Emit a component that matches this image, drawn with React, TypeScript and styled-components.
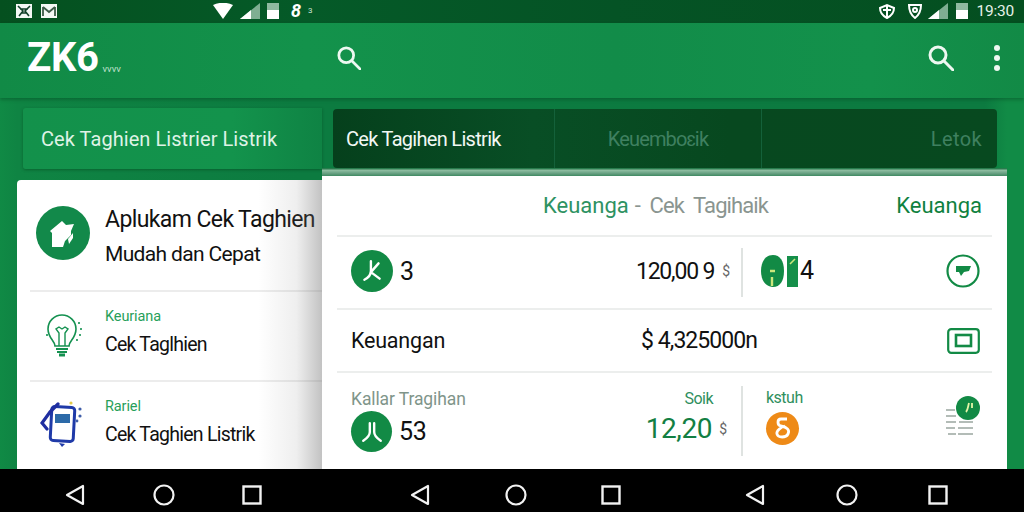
import React from "react";
import styled, { createGlobalStyle } from "styled-components";

const Global = createGlobalStyle`
  html, body { margin: 0; padding: 0; background: #0f8443; }
  #root { width: 1024px; height: 512px; overflow: hidden; }
  * { box-sizing: border-box; }
`;

const Page = styled.div`
  width: 1024px; height: 512px; display: flex; flex-direction: column;
  font-family: Roboto, "Liberation Sans", sans-serif; color: #111; overflow: hidden;
`;

const StatusBar = styled.div`
  height: 23px; flex: none; display: flex; align-items: center; color: #fff;
  padding: 0 10px 2px 16px;
  background: linear-gradient(90deg, #05501f 0%, #055a28 30%, #055325 60%, #044f20 100%);
`;
const StatusGroup = styled.div<{ $gap?: number; $ml?: number; $mr?: number }>`
  display: flex; align-items: center; gap: ${p => p.$gap ?? 7}px;
  margin-left: ${p => p.$ml ?? 0}px; margin-right: ${p => p.$mr ?? 0}px;
`;
const StatusTime = styled.span`font-size: 15.5px; color: #e6f2ea; letter-spacing: -.2px; margin-left: 0;`;
const StatusTiny = styled.span`font-size: 8px; color: #cfe5d6;`;
const StatusGlyph = styled.span`font-size: 18px; font-weight: 700; font-style: italic; color: #fff;`;

const AppBar = styled.header`
  height: 75px; flex: none; display: flex; align-items: center; color: #fff; position: relative;
  padding: 0 24px 6px 27px;
  background: linear-gradient(90deg, #118a46 0%, #13924b 30%, #128c49 60%, #13914b 85%, #128a46 100%);
  box-shadow: 0 2px 3px rgba(0,60,30,.35);
  z-index: 2;
`;
const Logo = styled.div`font-size: 40px; font-weight: 700; line-height: 1; letter-spacing: -.4px;`;
const LogoSub = styled.span`font-size: 9.5px; color: #bfe0cb; margin: 22px 0 0 4px;`;
const SearchA = styled.div`margin-left: 216px; display: flex;`;
const AppBarEnd = styled.div`margin-left: auto; display: flex; align-items: center; gap: 40px;`;
const Dots = styled.div`display: flex; flex-direction: column; gap: 4px;
  i { width: 6px; height: 6px; border-radius: 50%; background: #eef8f1; display: block; }
`;

const Body = styled.main`
  flex: 1; min-height: 0; display: flex; padding-left: 17px;
  background: linear-gradient(90deg, #108a45 0, #0f8443 17px, #0c7b40 300px, #0c7a40 985px, #118b46 1007px);
`;
const LeftCol = styled.section`width: 305px; flex: none; display: flex; flex-direction: column; padding-top: 10px;`;
const LeftTab = styled.div`
  height: 61px; margin-left: 6px; flex: none; border-radius: 3px 0 0 3px;
  display: flex; align-items: center; padding-left: 18px; font-size: 20px; letter-spacing: .06px; color: #dff3e6;
  background: linear-gradient(90deg, #13914b, #13934c 70%, #0f8344);
  box-shadow: 0 1px 3px rgba(0,50,20,.4);
  white-space: nowrap;
`;
const LeftCard = styled.div`
  flex: 1; margin-top: 11px; background: #fff; border-radius: 4px 0 0 0; position: relative; overflow: hidden;
  &::after { content: ""; position: absolute; top: 0; right: 0; bottom: 0; width: 64px;
    background: linear-gradient(90deg, rgba(120,120,120,0), rgba(120,120,120,.12) 60%, rgba(110,110,110,.42)); }
`;
const Hero = styled.div`height: 110px; display: flex; align-items: center; padding: 0 0 5px 19px; gap: 15px; white-space: nowrap;`;
const HeroIcon = styled.div`
  width: 54px; height: 54px; border-radius: 50%; background: #12894a; flex: none;
  display: flex; align-items: center; justify-content: center;
`;
const HeroCopy = styled.div`padding-top: 9px;`;
const HeroText = styled.div`font-size: 23px; line-height: 34px; letter-spacing: -.6px;`;
const HeroSub = styled.div`font-size: 21px; line-height: 34px; letter-spacing: -.65px;`;
const Item = styled.div`
  margin-left: 13px; border-top: 2px solid #ececec; height: 90px; display: flex; align-items: center;
  white-space: nowrap; padding-bottom: 6px;
`;
const ItemIcon = styled.div<{ $dy: number; $pr: number }>`
  width: 75px; flex: none; display: flex; justify-content: center; padding-right: ${p => p.$pr}px; padding-top: ${p => p.$dy}px;
`;
const ItemKicker = styled.div`font-size: 14.5px; color: #27a05a; line-height: 20px; letter-spacing: -.1px;`;
const ItemTitle = styled.div`font-size: 19.5px; line-height: 30px; letter-spacing: -.75px; margin-top: 3px;`;

const RightCol = styled.section`width: 685px; flex: none; display: flex; flex-direction: column; padding-top: 11px;`;
const Tabs = styled.div`
  height: 59px; flex: none; margin: 0 10px 0 11px; border-radius: 4px; display: flex; background: #07491f;
  background: linear-gradient(90deg, #05401c, #084e25 30%, #07481f 60%, #07491f);
`;
const Tab = styled.div<{ $w: number; $active?: boolean; $align?: string; $ls: number }>`
  width: ${p => p.$w}px; display: flex; align-items: center; white-space: nowrap;
  justify-content: ${p => p.$align ?? "center"};
  font-size: 20px;
  letter-spacing: ${p => p.$ls}px;
  color: ${p => (p.$active ? "#f2f8f4" : "#3f8060")};
  border-right: 1px solid #14613a;
  &:last-child { border-right: 0; flex: 1; padding-right: 15px; }
  ${p => (p.$active ? "padding-left: 13px;" : "")}
`;
const Glow = styled.div`
  height: 8px; flex: none; background: linear-gradient(180deg, #0d6a36 0, #8dbca0 30%, #5f9a7b 75%, #3f8a62 100%);
`;
const Panel = styled.div`flex: 1; min-height: 0; background: #fff; padding: 0 15px; display: flex; flex-direction: column; position: relative;`;
const PanelHead = styled.div`height: 59px; flex: none; display: flex; align-items: center; padding: 0 10px 0 206px; font-size: 22px; white-space: nowrap;`;
const HeadGreen = styled.span`color: #2e9262; margin-right: 6px;`;
const HeadGrey = styled.span`color: #8a9590; letter-spacing: -.9px; word-spacing: 5px;`;
const HeadEnd = styled.span`margin-left: auto; color: #0f8140;`;

const Row = styled.div<{ $h: number }>`
  height: ${p => p.$h}px; flex: none; border-top: 2px solid #eceeed; display: flex; align-items: center;
  padding-left: 14px; padding-right: 12px; white-space: nowrap;
`;
const Circle = styled.div<{ $s: number; $bg?: string }>`
  width: ${p => p.$s}px; height: ${p => p.$s}px; border-radius: 50%; background: ${p => p.$bg ?? "#128a45"}; flex: none;
  display: flex; align-items: center; justify-content: center;
`;
const Num = styled.span`font-size: 25px; margin-left: 7px; letter-spacing: -.3px;`;
const NumTight = styled(Num)`margin-left: 2px;`;
const Amount = styled.span`font-size: 23px; letter-spacing: -1.2px;`;
const Small = styled.span<{ $ml: number }>`font-size: 14px; margin-left: ${p => p.$ml}px; color: #666;`;
const VLine = styled.div<{ $h: number }>`width: 2px; height: ${p => p.$h}px; background: #dfe3e1; flex: none;`;
const Push = styled.div`flex: 1;`;
const LeftSide = styled.div`width: 390px; flex: none; display: flex; align-items: center; padding: 0 11px 3px 0;`;
const RightSide = styled.div<{ $pl?: number; $pb?: number }>`
  flex: 1; display: flex; align-items: center; padding-left: ${p => p.$pl ?? 18}px; padding-bottom: ${p => p.$pb ?? 4}px;
`;
const Label = styled.span`font-size: 21.5px; letter-spacing: -.2px;`;
const Money = styled.span`font-size: 23px; letter-spacing: -.95px; margin-right: 190px; margin-left: auto;`;
const Stack = styled.div`display: flex; flex-direction: column;`;
const StackEnd = styled(Stack)`align-items: flex-end; margin-right: 14px; margin-top: -4px;`;
const Caption = styled.span`font-size: 16px; color: #2f8f5d; line-height: 22px; letter-spacing: -.5px;`;
const SoikCaption = styled(Caption)`margin-right: 14px;`;
const CaptionGrey = styled.span`font-size: 17.5px; line-height: 22px; letter-spacing: -.1px; color: #7f958a; margin-bottom: 1px;`;
const GreenAmount = styled.span`font-size: 28px; color: #137f43; letter-spacing: -.4px; line-height: 38px;`;
const Row3Left = styled.div`width: 390px; flex: none; display: flex; align-items: center; padding-bottom: 1px;`;
const Inline = styled.div`display: flex; align-items: center;`;
const RightStack = styled(Stack)`gap: 3px; margin-top: -2px;`;
const Illus = styled.div`margin-left: auto; margin-top: 4px; margin-right: -1px; display: flex;`;

const NavBar = styled.nav`height: 43px; flex: none; background: #000; display: flex; align-items: center; padding-top: 10px; padding-bottom: 2px;`;
const NavGroup = styled.div<{ $w: number; $ml: number }>`
  width: ${p => p.$w}px; margin-left: ${p => p.$ml}px; display: flex; justify-content: space-between; align-items: center;
`;

const Mail = ({ k }: { k?: boolean }) => (
  <svg width="16" height="16" viewBox="0 0 16 16">
    <rect x="0" y="1" width="16" height="14" fill="#f4f8f5" />
    {k
      ? <path d="M2 3l5 5-4 5M14 3L9 8l4 5M4 6h8M5 10h6" stroke="#12402a" strokeWidth="1.6" fill="none" />
      : <path d="M2 4l6 5 6-5M2 4v9M14 4v9" stroke="#3d5a48" strokeWidth="1.8" fill="none" />}
  </svg>
);
const Wifi = () => <svg width="20" height="16" viewBox="0 0 20 16"><path d="M0 2C6-1 14-1 20 2L10 16z" fill="#fff" /></svg>;
const Signal = () => (
  <svg width="20" height="16" viewBox="0 0 20 16">
    <path d="M0 16L20 0v16z" fill="#7fae92" /><path d="M0 16L11 7v9z" fill="#fff" />
  </svg>
);
const Battery = () => (
  <svg width="12" height="17" viewBox="0 0 12 17">
    <rect x="0" y="1" width="12" height="16" fill="#8fb9a0" /><rect x="0" y="8" width="12" height="9" fill="#fff" />
  </svg>
);
const Shield = ({ t }: { t?: boolean }) => (
  <svg width="16" height="16" viewBox="0 0 16 16" fill="none" stroke="#fff" strokeWidth="2">
    {t
      ? <><path d="M1 5l7-3 7 3c0 5-3 8-7 10C4 13 1 10 1 5z" /><path d="M8 3v11M4 7h8" /></>
      : <><path d="M2 2h12c0 6-2 10-6 13C4 12 2 8 2 2z" /><circle cx="8" cy="7" r="2" /></>}
  </svg>
);
const Search = ({ size }: { size: number }) => (
  <svg width={size} height={size} viewBox="0 0 26 26" fill="none" stroke="#eef8f1" strokeWidth="3" strokeLinecap="round">
    <circle cx="10" cy="10" r="8" /><path d="M16 16l9 9" />
  </svg>
);
const Home = () => (
  <svg width="30" height="30" viewBox="0 0 30 30">
    <path d="M2 13L14 3l4 4 8-1-3 7v4l-6 6-2 6H4V15z" fill="#fff" />
    <path d="M20 21l5-6v5l-4 6z" fill="#fff" />
  </svg>
);
const Bulb = () => (
  <svg width="38" height="50" viewBox="0 0 38 50" fill="none" stroke="#149150" strokeWidth="1.6">
    <path d="M11 34c0-5-7-8-7-17A14 14 0 0 1 32 17c0 9-7 12-7 17z" />
    <path d="M15 34V21l-3-4 3-2 3 2 3-2 3 2-3 4v13" strokeWidth="1.4" />
    <path d="M12 37h12M13 40h10" strokeWidth="2.2" /><path d="M15 43h6" strokeWidth="3" />
    <path d="M35 10v2M37 16v2M36 22v2M33 27v2" strokeWidth="1.6" />
    <path d="M3 22v2" strokeWidth="1.6" />
  </svg>
);
const Phone = () => (
  <svg width="44" height="48" viewBox="0 0 44 48" fill="none">
    <rect x="11" y="7" width="23" height="34" rx="3" stroke="#1f3aa8" strokeWidth="3" transform="rotate(3 22 24)" />
    <rect x="15" y="14" width="15" height="9" fill="#2c6aa8" />
    <path d="M10 12L2 23l5 6M10 12l8-8" stroke="#1f2ea0" strokeWidth="3.2" strokeLinecap="round" />
    <path d="M19 43l3 4 3-3z" fill="#1f3aa8" />
    <circle cx="31" cy="3" r="1.6" fill="#e3cb4a" /><circle cx="40" cy="9" r="1.6" fill="#3f5da8" />
    <circle cx="40" cy="16" r="1.6" fill="#3f5da8" /><circle cx="37" cy="21" r="1.4" fill="#3f5da8" />
  </svg>
);
const KMark = ({ s, split }: { s: number; split?: boolean }) => (
  <svg width={s} height={s} viewBox="0 0 22 22" fill="none" stroke="#fff" strokeWidth="2.2" strokeLinecap="round">
    {split
      ? <path d="M9 3v8c0 3-3 6-6 8M13 3v8c0 3 3 6 6 8" />
      : <path d="M10 2v9c0 3-2 6-6 8M17 4l-7 8 8 6" />}
  </svg>
);
const Leaf = () => (
  <svg width="37" height="32" viewBox="0 0 37 32">
    <path d="M12 0c7 0 11 6 11 16s-4 16-11 16S0 26 0 16 5 0 12 0z" fill="#128a45" />
    <rect x="26" y="1" width="11" height="31" fill="#158f4a" />
    <path d="M9 16h5M11 22v9" stroke="#cbe77c" strokeWidth="2.4" />
    <path d="M29 9l5-5" stroke="#cbe77c" strokeWidth="1.6" />
  </svg>
);
const FlagCircle = () => (
  <svg width="34" height="34" viewBox="0 0 34 34" fill="none">
    <circle cx="17" cy="17" r="15.5" stroke="#128a45" strokeWidth="2.2" />
    <path d="M10 12h15l-2 5-5 1-3 4-2-4h-3z" fill="#128a45" />
  </svg>
);
const CardIcon = () => (
  <svg width="33" height="26" viewBox="0 0 33 26" fill="none">
    <rect x="1.2" y="1.2" width="30.6" height="23.6" rx="3" stroke="#128a45" strokeWidth="2.2" />
    <rect x="9" y="7" width="15" height="11" stroke="#128a45" strokeWidth="2.6" />
  </svg>
);
const Illustration = () => (
  <svg width="36" height="46" viewBox="0 0 36 46" fill="none">
    <path d="M1 14h9M1 20h10M1 26h10M14 26h14M1 32h9M13 32h15M3 38h8M13 38h15" stroke="#9aa6a0" strokeWidth="1.6" />
    <circle cx="23" cy="12" r="12" fill="#128a45" />
    <path d="M21 16c2-2 2-6 3-9M27 7v5" stroke="#e6f4a8" strokeWidth="1.8" />
  </svg>
);
const Orange = () => (
  <svg width="22" height="24" viewBox="0 0 22 24" fill="none" stroke="#fff" strokeWidth="2.8">
    <path d="M15 3H9C5 3 5 9 9 10c6 1 9 4 7 8-2 4-10 4-11 0-1-3 4-7 8-8" />
  </svg>
);
const NavBack = () => <svg width="20" height="22" viewBox="0 0 20 22" fill="none" stroke="#f2f2f2" strokeWidth="2.2"><path d="M18 2v18L2 11z" strokeLinejoin="round" /></svg>;
const NavHome = () => <svg width="22" height="22" viewBox="0 0 22 22" fill="none" stroke="#f2f2f2" strokeWidth="2.2"><circle cx="11" cy="11" r="9.5" /></svg>;
const NavRecent = () => <svg width="20" height="20" viewBox="0 0 20 20" fill="none" stroke="#f2f2f2" strokeWidth="2.4"><rect x="1.5" y="1.5" width="17" height="17" /></svg>;

const navGroups = [{ w: 197, ml: 65 }, { w: 211, ml: 148 }, { w: 203, ml: 124 }];

export default function App() {
  return (
    <Page>
      <Global />
      <StatusBar>
        <StatusGroup $gap={9}><Mail k /><Mail /></StatusGroup>
        <StatusGroup $ml={156}><Wifi /><Signal /><Battery /></StatusGroup>
        <StatusGroup $ml={12}><StatusGlyph>8</StatusGlyph><StatusTiny>3</StatusTiny></StatusGroup>
        <Push />
        <StatusGroup $gap={8}>
          <StatusGroup $gap={12} $mr={-3}><Shield t /><Shield /></StatusGroup>
          <Signal /><Battery /><StatusTime>19:30</StatusTime>
        </StatusGroup>
      </StatusBar>
      <AppBar>
        <Logo>ZK6</Logo>
        <LogoSub>vvvv</LogoSub>
        <SearchA><Search size={24} /></SearchA>
        <AppBarEnd><Search size={26} /><Dots><i /><i /><i /></Dots></AppBarEnd>
      </AppBar>
      <Body>
        <LeftCol>
          <LeftTab>Cek Taghien Listrier Listrik</LeftTab>
          <LeftCard>
            <Hero>
              <HeroIcon><Home /></HeroIcon>
              <HeroCopy>
                <HeroText>Aplukam Cek Taghien</HeroText>
                <HeroSub>Mudah dan Cepat</HeroSub>
              </HeroCopy>
            </Hero>
            <Item>
              <ItemIcon $dy={8} $pr={9}><Bulb /></ItemIcon>
              <div><ItemKicker>Keuriana</ItemKicker><ItemTitle>Cek Taglhien</ItemTitle></div>
            </Item>
            <Item>
              <ItemIcon $dy={2} $pr={11}><Phone /></ItemIcon>
              <div><ItemKicker>Rariel</ItemKicker><ItemTitle>Cek Taghien Listrik</ItemTitle></div>
            </Item>
          </LeftCard>
        </LeftCol>
        <RightCol>
          <Tabs>
            <Tab $w={222} $active $align="flex-start" $ls={-0.7}>Cek Tagihen Listrik</Tab>
            <Tab $w={207} $ls={-0.85}>Keuemboɛik</Tab>
            <Tab $w={235} $align="flex-end" $ls={0.4}>Letok</Tab>
          </Tabs>
          <Glow />
          <Panel>
            <PanelHead>
              <HeadGreen>Keuanga</HeadGreen><HeadGrey>- Cek Tagihaik</HeadGrey>
              <HeadEnd>Keuanga</HeadEnd>
            </PanelHead>
            <Row $h={73}>
              <LeftSide>
                <Circle $s={42}><KMark s={24} /></Circle>
                <Num>3</Num>
                <Push />
                <Amount>120,00 9</Amount><Small $ml={8}>$</Small>
              </LeftSide>
              <VLine $h={49} />
              <RightSide>
                <Leaf /><NumTight>4</NumTight><Push /><FlagCircle />
              </RightSide>
            </Row>
            <Row $h={63}>
              <Label>Keuangan</Label>
              <Money>$ 4,325000n</Money>
              <CardIcon />
            </Row>
            <Row $h={97}>
              <Row3Left>
                <Stack>
                  <CaptionGrey>Kallar Tragihan</CaptionGrey>
                  <Inline><Circle $s={41}><KMark s={24} split /></Circle><Num>53</Num></Inline>
                </Stack>
                <Push />
                <StackEnd>
                  <SoikCaption>Soik</SoikCaption>
                  <Inline><GreenAmount>12,20</GreenAmount><Small $ml={7}>$</Small></Inline>
                </StackEnd>
              </Row3Left>
              <VLine $h={70} />
              <RightSide $pl={23} $pb={8}>
                <RightStack>
                  <Caption>kstuh</Caption>
                  <Circle $s={33} $bg="#ee8a17"><Orange /></Circle>
                </RightStack>
                <Illus><Illustration /></Illus>
              </RightSide>
            </Row>
          </Panel>
        </RightCol>
      </Body>
      <NavBar>
        {navGroups.map(g => (
          <NavGroup key={g.ml} $w={g.w} $ml={g.ml}><NavBack /><NavHome /><NavRecent /></NavGroup>
        ))}
      </NavBar>
    </Page>
  );
}
